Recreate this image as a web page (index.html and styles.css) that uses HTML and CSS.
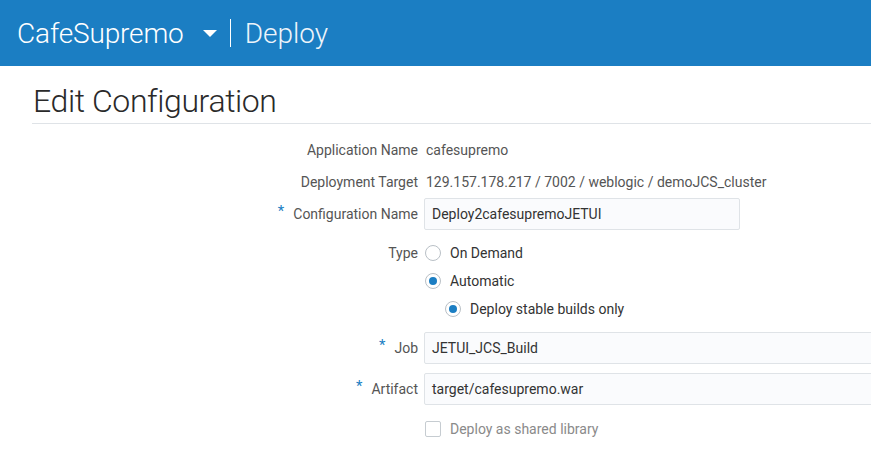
FILE: index.html
```html
<!DOCTYPE html>
<html>
<head>
<meta charset="utf-8">
<link rel="stylesheet" href="styles.css">
</head>
<body>
<header class="topbar">
  <span class="app-name">CafeSupremo</span>
  <svg class="caret" width="14" height="8" viewBox="0 0 14 8"><path d="M0 0 H14 L7 7 Z" fill="#fff"/></svg>
  <span class="divider"></span>
  <span class="section">Deploy</span>
</header>
<main class="page">
  <h1 class="title">Edit Configuration</h1>
  <div class="form">
    <div class="row r-text">
      <div class="label">Application Name</div>
      <div class="value">cafesupremo</div>
    </div>
    <div class="row r-text">
      <div class="label">Deployment Target</div>
      <div class="value">129.157.178.217 / 7002 / weblogic / demoJCS_cluster</div>
    </div>
    <div class="row r-input">
      <div class="label"><span class="req">*</span>Configuration Name</div>
      <div class="control"><div class="input short">Deploy2cafesupremoJETUI</div></div>
    </div>
    <div class="row r-radio first">
      <div class="label">Type</div>
      <div class="control"><span class="radio"></span><span class="opt">On Demand</span></div>
    </div>
    <div class="row r-radio">
      <div class="label"></div>
      <div class="control"><span class="radio on"></span><span class="opt">Automatic</span></div>
    </div>
    <div class="row r-radio">
      <div class="label"></div>
      <div class="control indent"><span class="radio on"></span><span class="opt">Deploy stable builds only</span></div>
    </div>
    <div class="row r-input spaced">
      <div class="label"><span class="req">*</span>Job</div>
      <div class="control"><div class="input long">JETUI_JCS_Build</div></div>
    </div>
    <div class="row r-input spaced">
      <div class="label"><span class="req">*</span>Artifact</div>
      <div class="control"><div class="input long">target/cafesupremo.war</div></div>
    </div>
    <div class="row r-radio check-row">
      <div class="label"></div>
      <div class="control"><span class="checkbox"></span><span class="opt disabled">Deploy as shared library</span></div>
    </div>
  </div>
</main>
</body>
</html>
```
FILE: styles.css
```css
* { box-sizing: border-box; }
html, body { margin: 0; padding: 0; background: #fff; overflow: hidden; }
body { font-family: Roboto, "Liberation Sans", sans-serif; width: 871px; height: 467px; }

.topbar {
  height: 66px;
  background: #1b7ec3;
  display: flex;
  align-items: center;
  padding-left: 17px;
  color: #fff;
}
.app-name {
  font-size: 28px;
  font-weight: 300;
  letter-spacing: -0.15px;
}
.caret { margin-left: 19px; margin-top: 2px; }
.divider {
  width: 1px;
  height: 28px;
  background: #fff;
  margin-left: 13px;
  margin-right: 14px;
}
.section {
  font-size: 28px;
  font-weight: 300;
  color: #eef4fa;
}

.page { padding-left: 32px; }
.title {
  margin: 0;
  font-size: 32px;
  font-weight: 300;
  letter-spacing: -0.4px;
  color: #2a2a2a;
  height: 58px;
  line-height: 1;
  padding-top: 19px;
  padding-left: 1px;
  border-bottom: 1px solid #dfe3e7;
}

.form { display: flex; flex-direction: column; padding-top: 10px; }
.row { display: flex; align-items: center; }
.r-text { height: 32px; }
.r-input { height: 32px; }
.r-radio { height: 28px; }
.r-radio.first { margin-top: 9px; }
.spaced { margin-top: 9px; }
.check-row { margin-top: 10px; }

.label {
  width: 386px;
  flex: none;
  text-align: right;
  font-size: 14px;
  color: #555;
}
.req { color: #1b7ec3; margin-right: 9px; font-size: 15px; position: relative; top: -3px; }
.value {
  margin-left: 8px;
  font-size: 14px;
  color: #555;
}
.control {
  margin-left: 6px;
  display: flex;
  align-items: center;
  flex: 1;
}
.control.indent { padding-left: 20px; }
.input {
  height: 32px;
  border: 1px solid #dfe3e7;
  border-radius: 2px;
  background: #fafbfd;
  font-size: 14px;
  color: #333;
  padding-left: 7px;
  display: flex;
  align-items: center;
}
.input.short { width: 316px; }
.input.long { width: 470px; }

.radio {
  width: 16px;
  height: 16px;
  border-radius: 50%;
  border: 1px solid #b9c0c6;
  background: #fff;
  margin-left: 1px;
  position: relative;
  flex: none;
}
.radio.on::after {
  content: "";
  position: absolute;
  left: 3px; top: 3px;
  width: 8px; height: 8px;
  border-radius: 50%;
  background: #1b7ec3;
}
.opt { margin-left: 9px; font-size: 14px; color: #333; }
.opt.disabled { color: #8a8a8a; }
.checkbox {
  width: 16px;
  height: 16px;
  border: 1px solid #c6ccd1;
  border-radius: 2px;
  background: #fff;
  margin-left: 1px;
  flex: none;
}
```
